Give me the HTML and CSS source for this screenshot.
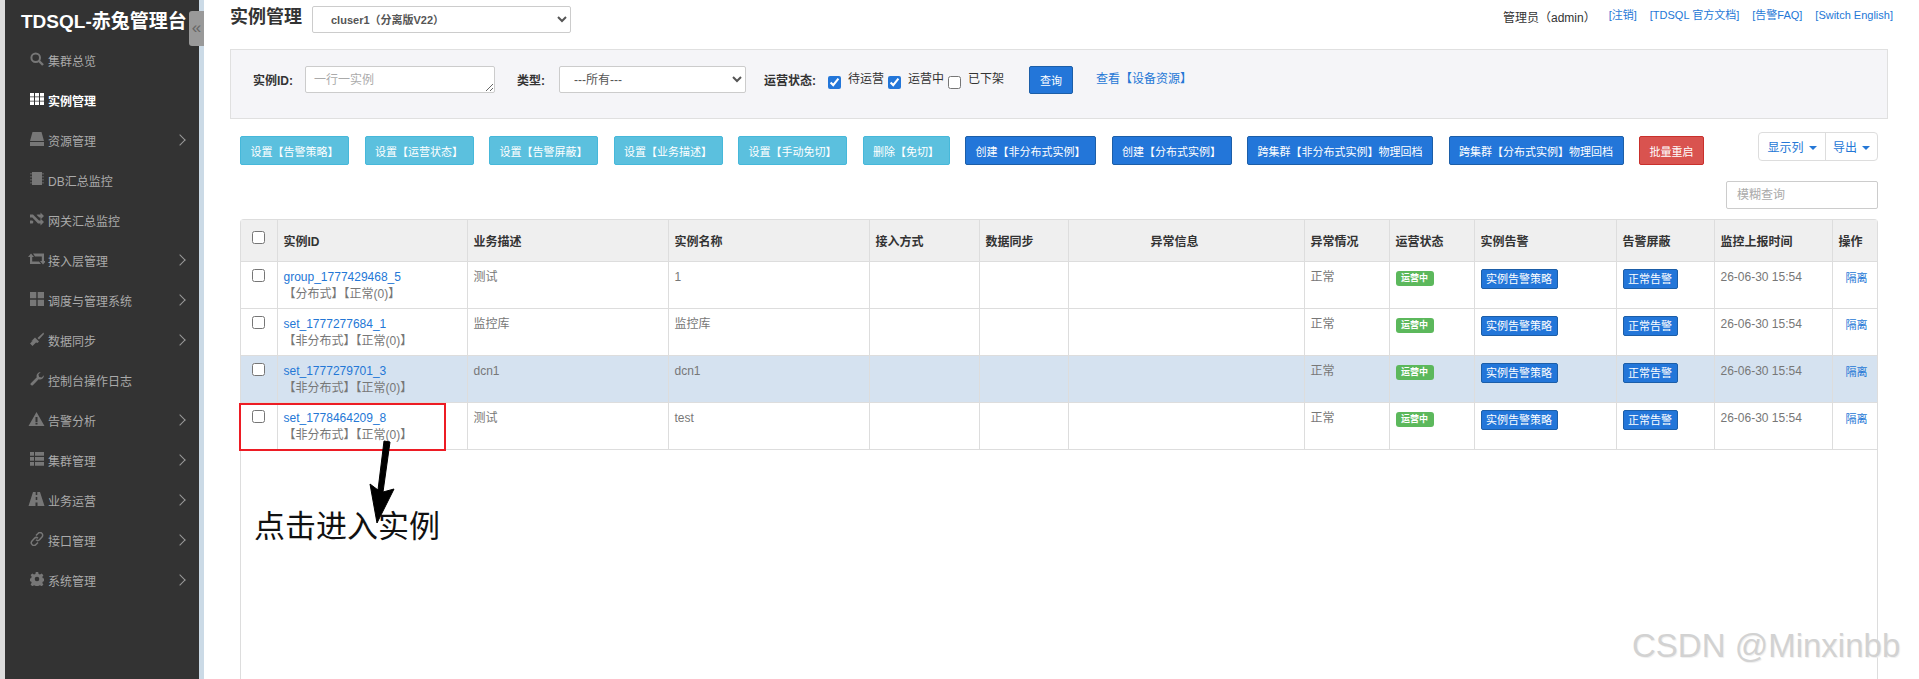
FILE: index.html
```html
<!DOCTYPE html>
<html lang="zh-CN">
<head>
  <meta charset="utf-8">
  <title>TDSQL-赤兔管理台</title>
  <link rel="stylesheet" href="styles.css">
</head>
<body>
<div class="page">
  <div class="sidebar">
    <div class="logo">TDSQL-赤兔管理台</div>
    <div class="collapse">«</div>
    <ul class="menu">
      <li><svg viewBox="0 0 14 14"><circle cx="5.7" cy="5.7" r="4.3" fill="none" stroke="currentColor" stroke-width="2"/><path d="M9 9l4 4" stroke="currentColor" stroke-width="2.4"/></svg>集群总览</li>
      <li class="active"><svg viewBox="0 0 14 14"><path d="M0 1h4v3.4H0zM5 1h4v3.4H5zM10 1h4v3.4h-4zM0 5.3h4v3.4H0zM5 5.3h4v3.4H5zM10 5.3h4v3.4h-4zM0 9.6h4V13H0zM5 9.6h4V13H5zM10 9.6h4V13h-4z"/></svg>实例管理</li>
      <li class="sub"><svg viewBox="0 0 14 14"><path d="M2.5 0h9L14 9H0zM0 10h14v4H0z"/></svg>资源管理</li>
      <li><svg viewBox="0 0 14 14"><path d="M2 0h10v13H2zM0.5 1h1v1.5h-1zM0.5 4h1v1.5h-1zM0.5 7h1v1.5h-1zM0.5 10h1v1.5h-1zM12.5 1h1v1.5h-1zM12.5 4h1v1.5h-1zM12.5 7h1v1.5h-1zM12.5 10h1v1.5h-1z"/></svg>DB汇总监控</li>
      <li><svg viewBox="0 0 14 14"><path d="M0 2.5h3l6 6h1.5V6.5L14 10l-3.500 3.500v-2H8L2.300 5.500H0zM0 8.500h2.300l1.200 1.300L2.700 11.500H0zM8 2.500h2.500v-2L14 4l-3.500 3.500v-2H9.300L8 4.200l-1.500-1.500z"/></svg>网关汇总监控</li>
      <li class="sub"><svg viewBox="0 0 17 14" class="wide"><path d="M3 1.500L6 5H4.200v4.500H11l2 2.500H2V5H0zM5 1.500h11V9h2l-3 3.500L12 9h1.800V4.500H7z"/></svg>接入层管理</li>
      <li class="sub"><svg viewBox="0 0 14 14"><path d="M0 0h6.300v6.300H0zM7.700 0H14v6.300H7.700zM0 7.700h6.300V14H0zM7.700 7.700H14V14H7.700z"/></svg>调度与管理系统</li>
      <li class="sub"><svg viewBox="0 0 14 14"><path d="M13.500.5L7.500 6l1.500 1.500L14 2zM1 9.500L5 5.500l4 4-1.500 1.500-1.500-.5L2.500 14 0 11.500 3 8.500z"/></svg>数据同步</li>
      <li><svg viewBox="0 0 14 14"><path d="M14 3.300a4 4 0 0 1-5.300 3.900L2.600 13.400a1.500 1.500 0 0 1-2-2L6.800 5.300A4 4 0 0 1 10.700 0L8.400 2.500l.8 2.400 2.400.7z"/></svg>控制台操作日志</li>
      <li class="sub"><svg viewBox="0 0 16 14" class="wide"><path fill-rule="evenodd" d="M8 0l8 14H0zM7 5v5h2V5zM7 10.800v1.700h2v-1.700z"/></svg>告警分析</li>
      <li class="sub"><svg viewBox="0 0 14 14"><path d="M0 0h4v3.800H0zM5 0h9v3.800H5zM0 5h4v3.800H0zM5 5h9v3.800H5zM0 10h4v3.800H0zM5 10h9v3.800H5z"/></svg>集群管理</li>
      <li class="sub"><svg viewBox="0 0 16 14" class="wide"><path fill-rule="evenodd" d="M4.500 0h2.700v3h1.600V0h2.700L16 14H9v-3.500H7V14H0zM7.200 5v3h1.600V5z"/></svg>业务运营</li>
      <li class="sub"><svg viewBox="0 0 14 14"><path fill="none" stroke="currentColor" stroke-width="1.500" d="M6 3.500L8 1.500a2.600 2.600 0 0 1 4 3.500L9.500 7.800a2.500 2.500 0 0 1-3.500 0M8 10.500L6 12.500a2.600 2.600 0 0 1-4-3.500L4.500 6.200a2.500 2.500 0 0 1 3.500 0"/></svg>接口管理</li>
      <li class="sub"><svg viewBox="0 0 14 14"><path fill-rule="evenodd" d="M5.800 0h2.400l.4 2 1.400.6 1.700-1.100 1.700 1.700-1.100 1.700.6 1.400 2 .4v2.400l-2 .4-.6 1.400 1.100 1.700-1.700 1.700-1.700-1.100-1.400.6-.4 2H5.800l-.4-2-1.400-.6-1.700 1.100L.6 12.500l1.100-1.700-.6-1.400-2-.4V6.600l2-.4.600-1.400L.6 3.100l1.700-1.700 1.700 1.100 1.400-.6zM7 4.700a2.300 2.300 0 1 0 0 4.600 2.300 2.300 0 0 0 0-4.600z"/></svg>系统管理</li>
    </ul>
  </div>

  <div class="main">
    <div class="topbar">
      <h3>实例管理</h3>
      <select class="set-select"><option>cluser1（分离版V22）</option></select>
      <div class="userinfo">
        <span class="user">管理员（admin）</span>
        <a href="#">[注销]</a>
        <a href="#">[TDSQL 官方文档]</a>
        <a href="#">[告警FAQ]</a>
        <a href="#">[Switch English]</a>
      </div>
    </div>

    <div class="filter">
      <label class="lbl">实例ID:</label>
      <textarea class="ids" placeholder="一行一实例"></textarea>
      <label class="lbl type-lbl">类型:</label>
      <select class="type-select"><option>---所有---</option></select>
      <label class="lbl state-lbl">运营状态:</label>
      <input type="checkbox" checked><span class="chk">待运营</span>
      <input type="checkbox" checked><span class="chk">运营中</span>
      <input type="checkbox"><span class="chk">已下架</span>
      <button class="btn primary query">查询</button>
      <a class="res-link" href="#">查看【设备资源】</a>
    </div>

    <div class="actions">
      <button class="btn info">设置【告警策略】</button>
      <button class="btn info">设置【运营状态】</button>
      <button class="btn info">设置【告警屏蔽】</button>
      <button class="btn info">设置【业务描述】</button>
      <button class="btn info">设置【手动免切】</button>
      <button class="btn info">删除【免切】</button>
      <button class="btn primary">创建【非分布式实例】</button>
      <button class="btn primary">创建【分布式实例】</button>
      <button class="btn primary">跨集群【非分布式实例】物理回档</button>
      <button class="btn primary">跨集群【分布式实例】物理回档</button>
      <button class="btn danger">批量重启</button>
      <div class="toolbar">
        <button>显示列<i class="caret"></i></button>
        <button>导出<i class="caret"></i></button>
      </div>
    </div>

    <div class="search-row"><input class="search" placeholder="模糊查询"></div>

    <div class="table-wrap">
      <table class="list">
        <colgroup>
          <col class="c0"><col class="c1"><col class="c2"><col class="c3"><col class="c4"><col class="c5"><col class="c6"><col class="c7"><col class="c8"><col class="c9"><col class="c10"><col class="c11"><col class="c12">
        </colgroup>
        <thead>
          <tr>
            <th><input type="checkbox"></th><th>实例ID</th><th>业务描述</th><th>实例名称</th><th>接入方式</th><th>数据同步</th><th class="center">异常信息</th><th>异常情况</th><th>运营状态</th><th>实例告警</th><th>告警屏蔽</th><th>监控上报时间</th><th>操作</th>
          </tr>
        </thead>
        <tbody>
          <tr>
            <td><input type="checkbox"></td>
            <td><a href="#">group_1777429468_5</a><br>【分布式】【正常(0)】</td>
            <td>测试</td><td>1</td><td></td><td></td><td></td><td>正常</td>
            <td><span class="badge">运营中</span></td>
            <td><button class="btn primary xs">实例告警策略</button></td>
            <td><button class="btn primary xs">正常告警</button></td>
            <td>26-06-30 15:54</td>
            <td><a class="op" href="#">隔离</a></td>
          </tr>
          <tr>
            <td><input type="checkbox"></td>
            <td><a href="#">set_1777277684_1</a><br>【非分布式】【正常(0)】</td>
            <td>监控库</td><td>监控库</td><td></td><td></td><td></td><td>正常</td>
            <td><span class="badge">运营中</span></td>
            <td><button class="btn primary xs">实例告警策略</button></td>
            <td><button class="btn primary xs">正常告警</button></td>
            <td>26-06-30 15:54</td>
            <td><a class="op" href="#">隔离</a></td>
          </tr>
          <tr class="hover">
            <td><input type="checkbox"></td>
            <td><a href="#">set_1777279701_3</a><br>【非分布式】【正常(0)】</td>
            <td>dcn1</td><td>dcn1</td><td></td><td></td><td></td><td>正常</td>
            <td><span class="badge">运营中</span></td>
            <td><button class="btn primary xs">实例告警策略</button></td>
            <td><button class="btn primary xs">正常告警</button></td>
            <td>26-06-30 15:54</td>
            <td><a class="op" href="#">隔离</a></td>
          </tr>
          <tr>
            <td><input type="checkbox"></td>
            <td><a href="#">set_1778464209_8</a><br>【非分布式】【正常(0)】</td>
            <td>测试</td><td>test</td><td></td><td></td><td></td><td>正常</td>
            <td><span class="badge">运营中</span></td>
            <td><button class="btn primary xs">实例告警策略</button></td>
            <td><button class="btn primary xs">正常告警</button></td>
            <td>26-06-30 15:54</td>
            <td><a class="op" href="#">隔离</a></td>
          </tr>
        </tbody>
      </table>
    </div>
  </div>

  <!-- annotations drawn over the screenshot -->
  <div class="mark-box"></div>
  <svg class="mark-arrow" viewBox="0 0 40 90"><path d="M21 2 L27 3 L20 53 L31 50 L14 84 L7 45 L15 51 Z" stroke="#000" stroke-width="1" stroke-linejoin="round"/></svg>
  <div class="mark-text">点击进入实例</div>
  <div class="watermark">CSDN @Minxinbb</div>
</div>
</body>
</html>
```

FILE: styles.css
```css
* {
  box-sizing: border-box;
}
html, body {
  margin: 0;
  height: 100%;
  overflow: hidden;
}
body {
  font-family: "Liberation Sans", "Noto Sans CJK SC", sans-serif;
  font-size: 12px;
  color: #333;
  background: #fff;
}
a {
  color: #2477d6;
  text-decoration: none;
}
.page {
  position: relative;
  display: flex;
  height: 679px;
}

/* sidebar */
.sidebar {
  position: relative;
  flex: 0 0 204px;
  background: #333;
  border-left: 5px solid #ddd;
  border-right: 5px solid #cbdae6;
}
.logo {
  height: 40px;
  padding: 9px 0 0 16px;
  font-size: 19px;
  line-height: 26px;
  font-weight: bold;
  color: #fff;
  white-space: nowrap;
}
.collapse {
  position: absolute;
  left: 184px;
  top: 11px;
  width: 15px;
  height: 35px;
  background: #999;
  border-radius: 3px 0 0 3px;
  color: #666;
  font-size: 17px;
  line-height: 33px;
  text-align: center;
}
.menu {
  list-style: none;
  margin: 0;
  padding: 0;
}
.menu li {
  position: relative;
  display: flex;
  align-items: center;
  height: 40px;
  padding-left: 25px;
  color: #aaa;
}
.menu li svg {
  width: 14px;
  height: 14px;
  margin-right: 4px;
  margin-top: -3px;
  fill: #777;
  color: #777;
  flex: none;
}
.menu li svg.wide {
  width: 17px;
  margin-left: -2px;
  margin-right: 3px;
}
.menu li.active {
  color: #fff;
  font-weight: bold;
}
.menu li.active svg {
  fill: #fff;
}
.menu li.sub:after {
  content: "";
  position: absolute;
  left: 171px;
  top: 16px;
  width: 7px;
  height: 7px;
  border-top: 1px solid #999;
  border-right: 1px solid #999;
  transform: rotate(45deg);
}

/* main */
.main {
  flex: 1;
  min-width: 0;
  display: flex;
  flex-direction: column;
  padding-left: 26px;
}
.topbar {
  display: flex;
  align-items: flex-start;
  height: 49px;
  padding-top: 6px;
}
.topbar h3 {
  margin: 0 10px 0 0;
  font-size: 18px;
  line-height: 23px;
  font-weight: bold;
}
.set-select {
  width: 259px;
  height: 27px;
  padding-left: 14px;
  font-family: inherit;
  font-size: 11px;
  font-weight: bold;
  color: #555;
  background: #fff;
  border: 1px solid #ccc;
  border-radius: 2px;
}
.userinfo {
  margin-left: auto;
  margin-right: 26px;
  display: flex;
  gap: 13px;
  font-size: 11px;
  line-height: 16px;
  padding-top: 1px;
}
.userinfo .user {
  font-size: 12px;
  padding-top: 3px;
}
.filter {
  display: flex;
  align-items: flex-start;
  height: 70px;
  margin-right: 31px;
  padding: 16px 0 0 22px;
  background: #f5f5f8;
  border: 1px solid #e0e0e0;
}
.lbl {
  font-weight: bold;
  line-height: 30px;
}
.ids {
  width: 190px;
  height: 27px;
  margin: 0 0 0 12px;
  padding: 3px 8px;
  font-family: inherit;
  font-size: 12px;
  border: 1px solid #ccc;
  border-radius: 2px;
}
.ids::placeholder,
.search::placeholder {
  color: #aaa;
}
.type-lbl {
  margin-left: 22px;
}
.type-select {
  width: 187px;
  height: 27px;
  margin-left: 14px;
  padding-left: 10px;
  font-family: inherit;
  font-size: 12px;
  color: #555;
  background: #fff;
  border: 1px solid #ccc;
  border-radius: 2px;
}
.state-lbl {
  margin-left: 18px;
  margin-right: 12px;
}
.filter input[type=checkbox] {
  margin: 10px 7px 0 0;
  width: 13px;
  height: 13px;
  accent-color: #2376d9;
}
.chk {
  line-height: 27px;
  margin-right: 4px;
}
.btn {
  font-family: inherit;
  font-size: 11px;
  height: 29px;
  padding: 0 9.5px;
  border: 1px solid transparent;
  border-radius: 2px;
  color: #fff;
  white-space: nowrap;
}
.btn.info {
  background: #5bc0de;
  border-color: #46b8da;
}
.btn.primary {
  background: #2376d9;
  border-color: #1c5ea8;
}
.btn.danger {
  background: #d9534f;
  border-color: #c9302c;
}
.btn.query {
  width: 44px;
  height: 28px;
  padding: 0;
  margin-left: 21px;
}
.res-link {
  margin-left: 23px;
  line-height: 26px;
}
.actions {
  display: flex;
  align-items: flex-start;
  gap: 15.5px;
  margin-top: 17px;
  margin-left: 10px;
  margin-right: 41px;
}
.toolbar {
  display: flex;
  margin-left: auto;
  margin-top: -4px;
  height: 29px;
  border: 1px solid #ddd;
  border-radius: 4px;
  background: #fff;
}
.toolbar button {
  font-family: inherit;
  font-size: 12px;
  color: #2477d6;
  background: none;
  border: 0;
  padding: 0;
  width: 66px;
}
.toolbar button + button {
  width: 52px;
  border-left: 1px solid #ddd;
}
.caret {
  display: inline-block;
  margin-left: 5px;
  vertical-align: 2px;
  border-top: 4px solid #2477d6;
  border-left: 4px solid transparent;
  border-right: 4px solid transparent;
}
.search-row {
  display: flex;
  justify-content: flex-end;
  margin: 16px 41px 0 0;
}
.search {
  width: 152px;
  height: 28px;
  padding: 0 10px;
  font-family: inherit;
  font-size: 12px;
  border: 1px solid #ccc;
  border-radius: 2px;
}

/* table */
.table-wrap {
  flex: 1;
  margin: 10px 41px 0 10px;
  border: 1px solid #ddd;
  border-bottom: 0;
  border-radius: 4px 4px 0 0;
}
.list {
  width: 100%;
  table-layout: fixed;
  border-collapse: collapse;
}
.c0 { width: 36px; }
.c1 { width: 190px; }
.c2 { width: 201px; }
.c3 { width: 201px; }
.c4 { width: 110px; }
.c5 { width: 89px; }
.c6 { width: 236px; }
.c7 { width: 85px; }
.c8 { width: 85px; }
.c9 { width: 142px; }
.c10 { width: 98px; }
.c11 { width: 118px; }
.list th {
  height: 41px;
  padding: 0 6px;
  text-align: left;
  font-weight: bold;
  color: #333;
  background: #efefef;
  border-left: 1px solid #ddd;
  border-bottom: 1px solid #ddd;
}
.list th.center {
  padding-left: 82px;
}
.list td {
  height: 47px;
  padding: 7px 6px 0;
  vertical-align: top;
  line-height: 17px;
  color: #777;
  border-left: 1px solid #ddd;
  border-bottom: 1px solid #ddd;
  white-space: nowrap;
}
.list th:first-child,
.list td:first-child {
  border-left: 0;
  padding: 0 0 0 11px;
}
.list td:first-child input {
  margin: 7px 0 0;
}
.list input[type=checkbox] {
  width: 13px;
  height: 13px;
  margin: 0 0 6px;
}
.list tr.hover td {
  background: #d5e2f0;
}
.btn.xs {
  height: 20px;
  padding: 0 4.5px;
  line-height: 16px;
}
.badge {
  display: inline-block;
  margin-top: 1px;
  height: 15px;
  width: 38px;
  border-radius: 3px;
  background: #5cb85c;
  color: #fff;
  font-size: 9px;
  font-weight: bold;
  line-height: 15px;
  text-align: center;
}
.op {
  display: block;
  padding: 1px 0 0 7px;
  font-size: 11px;
}

/* annotations */
.mark-box {
  position: absolute;
  left: 239px;
  top: 403px;
  width: 207px;
  height: 48px;
  border: 2px solid #ed1c24;
}
.mark-arrow {
  position: absolute;
  left: 363px;
  top: 439px;
  width: 40px;
  height: 90px;
}
.mark-text {
  position: absolute;
  left: 254px;
  top: 504px;
  font-size: 31px;
  line-height: 46px;
  color: #111;
}
.watermark {
  position: absolute;
  left: 1632px;
  top: 626px;
  font-size: 33px;
  line-height: 40px;
  color: #d2d2d2;
  text-shadow: 1px 1px 1px #eee;
  white-space: nowrap;
}
```
